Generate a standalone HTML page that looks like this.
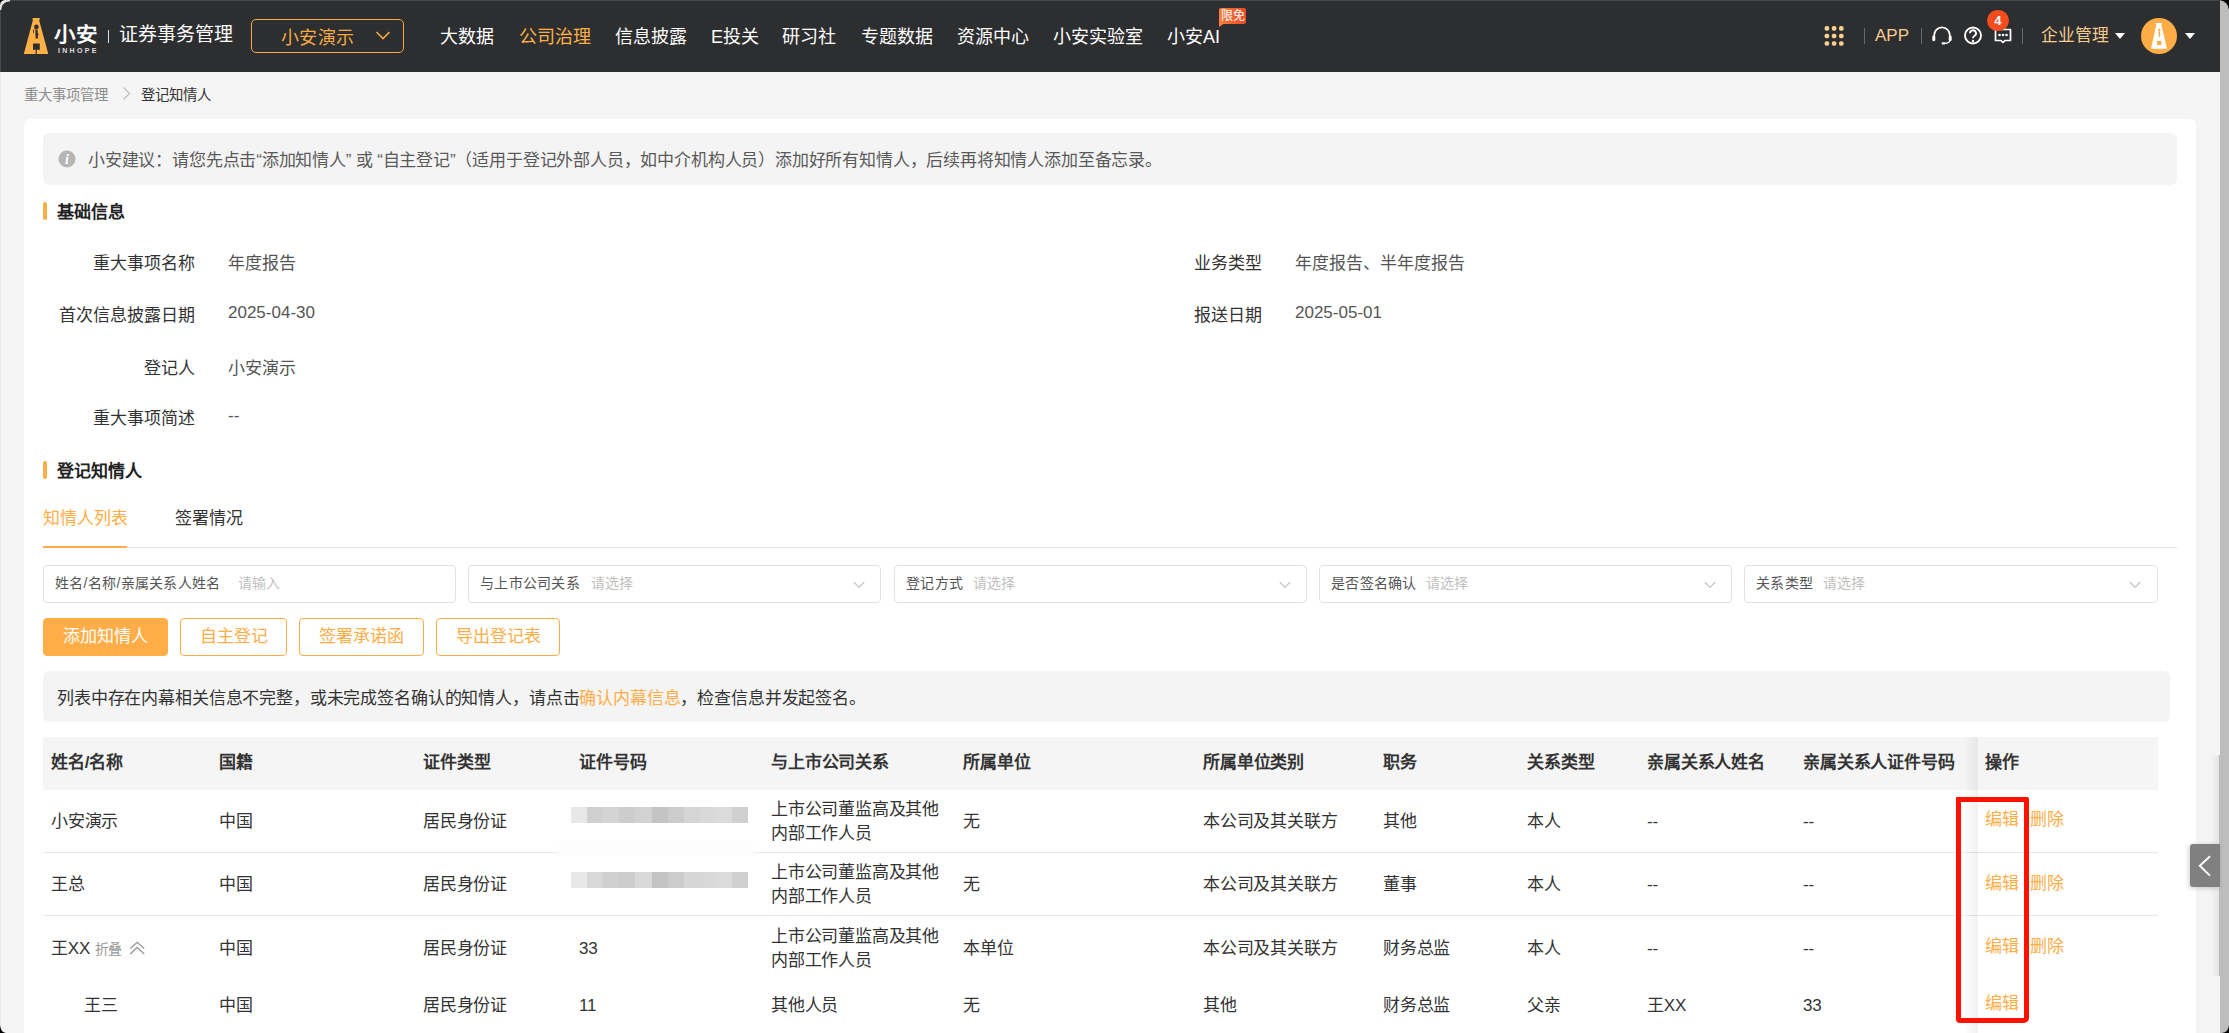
<!DOCTYPE html>
<html lang="zh-CN"><head><meta charset="utf-8">
<style>
*{box-sizing:border-box;margin:0;padding:0}
html,body{text-spacing-trim:space-all;width:2229px;height:1033px;overflow:hidden;background:#f5f5f5;font-family:"Liberation Sans",sans-serif;color:#333}
.a{position:absolute;white-space:nowrap}
#hdr{position:absolute;left:0;top:0;width:2220px;height:72px;background:#2d2e30;border-top-left-radius:10px;border-top:1px solid #47484a;border-left:1px solid #47484a}
.nav{position:absolute;top:25px;font-size:18px;line-height:24px;color:#fff}
.card{position:absolute;left:24px;top:119px;width:2172px;height:940px;background:#fff;border-radius:6px}
.lbl{position:absolute;font-size:17px;line-height:22px;color:#333;text-align:right;white-space:nowrap}
.val{position:absolute;font-size:17px;line-height:22px;color:#555;white-space:nowrap}
.sec{position:absolute;left:43px;width:4px;height:18px;background:#ffad47;border-radius:2px}
.sect{position:absolute;left:57px;font-size:17px;line-height:22px;font-weight:bold;color:#222}
.inp{position:absolute;top:565px;height:38px;width:413px;border:1px solid #e3e3e3;border-radius:4px;background:#fff}
.inp svg{}
.inp .l{position:absolute;left:11px;top:7px;font-size:14px;line-height:20px;color:#555;letter-spacing:0.3px}
.inp .p{position:absolute;top:7px;font-size:14px;line-height:20px;color:#bfbfbf}
.btn{position:absolute;top:618px;height:38px;border:1px solid #ffad47;border-radius:4px;color:#ffad47;font-size:17px;line-height:36px;text-align:center}
.th{position:absolute;top:752px;font-size:17px;line-height:22px;font-weight:bold;color:#333;letter-spacing:-0.15px;white-space:nowrap}
.td{position:absolute;font-size:17px;line-height:22px;color:#333;white-space:nowrap;letter-spacing:-0.2px}
.op{position:absolute;font-size:17px;line-height:22px;color:#ffad47;white-space:nowrap}
</style></head><body>
<div id="hdr"></div>
<!-- logo -->
<svg class="a" style="left:22px;top:16px" width="30" height="40" viewBox="0 0 30 40">
<path fill="#fdb045" d="M10.5 2 H18 L17.2 4.5 L26.3 38 H1.8 L10.8 4.5 Z"/>
<rect x="11" y="27.5" width="6.8" height="6.3" fill="#2d2e30"/>
<rect x="13.6" y="33.8" width="1.2" height="4.2" fill="#2d2e30"/>
<circle cx="14.4" cy="10.9" r="2.3" fill="#2d2e30"/>
<path fill="#2d2e30" d="M13.3 13.5 h2.2 l0.3 4 l1 1 l-1 1.2 l0.2 2.8 h-2.4 Z"/>
<path fill="none" stroke="#2d2e30" stroke-width="0.8" d="M12.2 13 q-1.3 1.5 -0.6 4"/>
</svg>
<div class="a" style="left:54px;top:22px;font-size:21.5px;line-height:26px;font-weight:bold;color:#fff;transform:scaleY(0.93);transform-origin:0 100%">小安</div>
<div class="a" style="left:58px;top:47px;font-size:7px;line-height:8px;font-weight:bold;color:#ddd;letter-spacing:2.3px">INHOPE</div>
<div class="a" style="left:108px;top:30px;width:1px;height:13px;background:#ddd"></div>
<div class="a" style="left:119px;top:23px;font-size:19px;line-height:24px;color:#fff">证券事务管理</div>
<div class="a" style="left:251px;top:19px;width:153px;height:34px;border:1.5px solid #f5a940;border-radius:5px"></div>
<div class="a" style="left:281px;top:26px;font-size:18px;line-height:24px;letter-spacing:0.4px;color:#f5a940">小安演示</div>
<svg class="a" style="left:375px;top:30px" width="16" height="11" viewBox="0 0 16 11"><path d="M1.5 2 L8 8.5 L14.5 2" fill="none" stroke="#f5a940" stroke-width="1.6"/></svg>

<div class="nav" style="left:440px">大数据</div>
<div class="nav" style="left:519px;color:#fdb045">公司治理</div>
<div class="nav" style="left:615px">信息披露</div>
<div class="nav" style="left:711px">E投关</div>
<div class="nav" style="left:782px">研习社</div>
<div class="nav" style="left:861px">专题数据</div>
<div class="nav" style="left:957px">资源中心</div>
<div class="nav" style="left:1053px">小安实验室</div>
<div class="nav" style="left:1167px">小安AI</div>
<div class="a" style="left:1219px;top:8px;width:27px;height:16px;background:linear-gradient(to right,#fb7d3c,#ef4a28);border-radius:2px 2px 2px 0;font-size:12px;line-height:16px;color:#fff;text-align:center">限免</div>
<div class="a" style="left:1219px;top:23px;width:0;height:0;border-top:4px solid #fb7d3c;border-right:6px solid transparent"></div>

<!-- right icons -->
<svg class="a" style="left:1823px;top:25px" width="22" height="22" viewBox="0 0 22 22" fill="#f9d08f">
<rect x="1.6" y="1.1" width="4.6" height="4.6" rx="1.8"/><rect x="8.8" y="1.1" width="4.6" height="4.6" rx="1.8"/><rect x="16" y="1.1" width="4.6" height="4.6" rx="1.8"/>
<rect x="1.6" y="8.7" width="4.6" height="4.6" rx="1.8"/><rect x="8.8" y="8.7" width="4.6" height="4.6" rx="1.8"/><rect x="16" y="8.7" width="4.6" height="4.6" rx="1.8"/>
<rect x="1.6" y="16.2" width="4.6" height="4.6" rx="1.8"/><rect x="8.8" y="16.2" width="4.6" height="4.6" rx="1.8"/><rect x="16" y="16.2" width="4.6" height="4.6" rx="1.8"/>
</svg>
<div class="a" style="left:1864px;top:28px;width:1px;height:16px;background:#6a6a6a"></div>
<div class="a" style="left:1875px;top:25px;font-size:17px;line-height:22px;color:#f5cc8f">APP</div>
<div class="a" style="left:1921px;top:28px;width:1px;height:16px;background:#6a6a6a"></div>
<svg class="a" style="left:1930px;top:25px" width="24" height="22" viewBox="0 0 24 22">
<path d="M4.2 12 V10.2 A7.8 7.8 0 0 1 19.8 10.2 V12" fill="none" stroke="#fff" stroke-width="1.7"/>
<rect x="2.3" y="10.6" width="3" height="5.6" rx="1.4" fill="#fff"/>
<rect x="18.7" y="10.6" width="3" height="5.6" rx="1.4" fill="#fff"/>
<path d="M19.8 15.5 Q19.5 18.2 14.5 18.4" fill="none" stroke="#fff" stroke-width="1.4"/>
<rect x="11.6" y="17.2" width="3.8" height="2.3" rx="1.1" fill="#fff"/>
</svg>
<svg class="a" style="left:1962px;top:25px" width="22" height="22" viewBox="0 0 22 22">
<circle cx="11" cy="10.5" r="8" fill="none" stroke="#fff" stroke-width="1.9"/>
<path d="M8 8.2 A3 3 0 1 1 12.2 11 Q11 11.6 11 13.2" fill="none" stroke="#fff" stroke-width="1.9"/>
<circle cx="11" cy="15.9" r="1.2" fill="#fff"/>
</svg>
<svg class="a" style="left:1993px;top:27px" width="20" height="18" viewBox="0 0 20 18">
<path d="M2.5 2.5 H17.5 V13.5 H12 L10 15.5 L8 13.5 H2.5 Z" fill="none" stroke="#fff" stroke-width="1.7" stroke-linejoin="round"/>
<circle cx="6.5" cy="8" r="1.3" fill="#fff"/><circle cx="10" cy="8" r="1.3" fill="#fff"/><circle cx="13.5" cy="8" r="1.3" fill="#fff"/>
</svg>
<div class="a" style="left:1987px;top:9.5px;width:21.5px;height:21.5px;border-radius:50%;background:#f24c1f;color:#fff;font-size:13px;font-weight:bold;line-height:21.5px;text-align:center">4</div>
<div class="a" style="left:2022px;top:28px;width:1px;height:16px;background:#6a6a6a"></div>
<div class="a" style="left:2041px;top:23.5px;font-size:16.8px;line-height:24px;color:#f5cc8f">企业管理</div>
<div class="a" style="left:2115px;top:33px;width:0;height:0;border-left:5px solid transparent;border-right:5px solid transparent;border-top:6px solid #fff"></div>
<div class="a" style="left:2141px;top:18px;width:36px;height:36px;border-radius:50%;background:#fdad45"></div>
<svg class="a" style="left:2149px;top:22px" width="20" height="28" viewBox="0 0 20 28">
<path fill="#fff" d="M6.5 1 H13 L12.4 3 L18 26.8 H2 L7.2 3 Z"/>
<rect x="8" y="19" width="4.4" height="4" fill="#fdad45"/>
<circle cx="10.2" cy="8" r="1.3" fill="#fdad45"/>
<path fill="#fdad45" d="M9.6 9.5 h1.3 l0.2 2.2 l0.6 0.7 l-0.6 0.7 l0.1 1.8 h-1.4 Z"/>
</svg>
<div class="a" style="left:2185px;top:33px;width:0;height:0;border-left:5px solid transparent;border-right:5px solid transparent;border-top:6px solid #fff"></div>
<!-- scrollbar strip -->
<div class="a" style="left:2220px;top:0;width:9px;height:1033px;background:#bdbdbd"></div>

<!-- breadcrumb -->
<div class="a" style="left:24px;top:85px;font-size:14.4px;color:#999;line-height:20px;color:#8c8c8c">重大事项管理</div>
<svg class="a" style="left:121px;top:86px" width="11" height="15" viewBox="0 0 11 15"><path d="M2.5 1.5 L8.5 7.5 L2.5 13.5" fill="none" stroke="#bbb" stroke-width="1.1"/></svg>
<div class="a" style="left:141px;top:85px;font-size:14.4px;line-height:20px;color:#333">登记知情人</div>

<div class="card"></div>
<div class="a" style="left:43px;top:133px;width:2134px;height:52px;background:#f4f4f4;border-radius:6px"></div>
<svg class="a" style="left:58px;top:150px" width="18" height="18" viewBox="0 0 18 18"><circle cx="9" cy="9" r="8.5" fill="#b5b5b5"/><text x="9" y="14" text-anchor="middle" font-family="Liberation Serif" font-style="italic" font-weight="bold" font-size="14" fill="#fff">i</text></svg>
<div class="a" style="left:88px;top:150px;font-size:17px;line-height:22px;letter-spacing:-0.18px;color:#595959">小安建议：请您先点击“添加知情人” 或 “自主登记”（适用于登记外部人员，如中介机构人员）添加好所有知情人，后续再将知情人添加至备忘录。</div>

<div class="sec" style="top:202px"></div>
<div class="sect" style="top:202px">基础信息</div>

<div class="lbl" style="left:0;width:195px;top:253px">重大事项名称</div>
<div class="val" style="left:228px;top:253px">年度报告</div>
<div class="lbl" style="left:0;width:195px;top:305px">首次信息披露日期</div>
<div class="val" style="left:228px;top:302px">2025-04-30</div>
<div class="lbl" style="left:0;width:195px;top:358px">登记人</div>
<div class="val" style="left:228px;top:358px">小安演示</div>
<div class="lbl" style="left:0;width:195px;top:408px">重大事项简述</div>
<div class="val" style="left:228px;top:405px">--</div>

<div class="lbl" style="left:1100px;width:162px;top:253px">业务类型</div>
<div class="val" style="left:1295px;top:253px">年度报告、半年度报告</div>
<div class="lbl" style="left:1100px;width:162px;top:305px">报送日期</div>
<div class="val" style="left:1295px;top:302px">2025-05-01</div>

<div class="sec" style="top:461px"></div>
<div class="sect" style="top:461px">登记知情人</div>

<div class="a" style="left:43px;top:508px;font-size:17px;line-height:22px;color:#ffad47">知情人列表</div>
<div class="a" style="left:175px;top:508px;font-size:17px;line-height:22px;color:#333">签署情况</div>
<div class="a" style="left:43px;top:547px;width:2134px;height:1px;background:#e4e7ed"></div>
<div class="a" style="left:43px;top:546px;width:84px;height:2px;background:#ffad47"></div>

<div class="inp" style="left:43px"><span class="l">姓名/名称/亲属关系人姓名</span><span class="p" style="left:194px">请输入</span></div>
<div class="inp" style="left:468px"><span class="l">与上市公司关系</span><span class="p" style="left:122px">请选择</span><svg style="position:absolute;left:384px;top:15px" width="12" height="8" viewBox="0 0 12 8"><path d="M0.8 1 L6 6.5 L11.2 1" fill="none" stroke="#c4c4c4" stroke-width="1.1"/></svg></div>
<div class="inp" style="left:894px"><span class="l">登记方式</span><span class="p" style="left:78px">请选择</span><svg style="position:absolute;left:384px;top:15px" width="12" height="8" viewBox="0 0 12 8"><path d="M0.8 1 L6 6.5 L11.2 1" fill="none" stroke="#c4c4c4" stroke-width="1.1"/></svg></div>
<div class="inp" style="left:1319px"><span class="l">是否签名确认</span><span class="p" style="left:106px">请选择</span><svg style="position:absolute;left:384px;top:15px" width="12" height="8" viewBox="0 0 12 8"><path d="M0.8 1 L6 6.5 L11.2 1" fill="none" stroke="#c4c4c4" stroke-width="1.1"/></svg></div>
<div class="inp" style="left:1744px;width:414px"><span class="l">关系类型</span><span class="p" style="left:78px">请选择</span><svg style="position:absolute;left:384px;top:15px" width="12" height="8" viewBox="0 0 12 8"><path d="M0.8 1 L6 6.5 L11.2 1" fill="none" stroke="#c4c4c4" stroke-width="1.1"/></svg></div>

<div class="btn" style="left:43px;width:125px;background:#ffad47;color:#fff">添加知情人</div>
<div class="btn" style="left:180px;width:107px">自主登记</div>
<div class="btn" style="left:299px;width:125px">签署承诺函</div>
<div class="btn" style="left:436px;width:124px">导出登记表</div>

<div class="a" style="left:43px;top:671px;width:2127px;height:51px;background:#f4f4f4;border-radius:6px"></div>
<div class="a" style="left:57px;top:688px;font-size:17px;line-height:22px;letter-spacing:-0.15px;color:#333">列表中存在内幕相关信息不完整，或未完成签名确认的知情人，请点击<span style="color:#ffad47">确认内幕信息</span>，检查信息并发起签名。</div>

<!-- table -->
<div class="a" style="left:43px;top:737px;width:2115px;height:53px;background:#f5f5f5"></div>
<div class="th" style="left:51px">姓名/名称</div>
<div class="th" style="left:219px">国籍</div>
<div class="th" style="left:423px">证件类型</div>
<div class="th" style="left:579px">证件号码</div>
<div class="th" style="left:771px">与上市公司关系</div>
<div class="th" style="left:963px">所属单位</div>
<div class="th" style="left:1203px">所属单位类别</div>
<div class="th" style="left:1383px">职务</div>
<div class="th" style="left:1527px">关系类型</div>
<div class="th" style="left:1647px">亲属关系人姓名</div>
<div class="th" style="left:1803px">亲属关系人证件号码</div>
<div class="th" style="left:1985px">操作</div>

<!-- row borders -->
<div class="a" style="left:43px;top:852px;width:2115px;height:1px;background:#e8e8f0"></div>
<div class="a" style="left:43px;top:915px;width:2115px;height:1px;background:#e8e8f0"></div>
<div class="a" style="left:559px;top:840px;width:194px;height:16px;background:#fdfdfd"></div>
<div class="a" style="left:571.0px;top:807px;width:16.2px;height:16px;background:#e8e8e8"></div><div class="a" style="left:587.1px;top:807px;width:16.2px;height:16px;background:#d0d0d0"></div><div class="a" style="left:603.2px;top:807px;width:16.2px;height:16px;background:#d4d4d4"></div><div class="a" style="left:619.3px;top:807px;width:16.2px;height:16px;background:#cdcdcd"></div><div class="a" style="left:635.4px;top:807px;width:16.2px;height:16px;background:#d2d2d2"></div><div class="a" style="left:651.5px;top:807px;width:16.2px;height:16px;background:#c4c4c4"></div><div class="a" style="left:667.6px;top:807px;width:16.2px;height:16px;background:#cccccc"></div><div class="a" style="left:683.7px;top:807px;width:16.2px;height:16px;background:#d5d5d5"></div><div class="a" style="left:699.8px;top:807px;width:16.2px;height:16px;background:#d9d9d9"></div><div class="a" style="left:715.9px;top:807px;width:16.2px;height:16px;background:#dbdbdb"></div><div class="a" style="left:732.0px;top:807px;width:16.2px;height:16px;background:#d0d0d0"></div>
<div class="a" style="left:571.0px;top:872px;width:16.2px;height:16px;background:#e8e8e8"></div><div class="a" style="left:587.1px;top:872px;width:16.2px;height:16px;background:#d8d8d8"></div><div class="a" style="left:603.2px;top:872px;width:16.2px;height:16px;background:#d0d0d0"></div><div class="a" style="left:619.3px;top:872px;width:16.2px;height:16px;background:#cdcdcd"></div><div class="a" style="left:635.4px;top:872px;width:16.2px;height:16px;background:#d9d9d9"></div><div class="a" style="left:651.5px;top:872px;width:16.2px;height:16px;background:#c3c3c3"></div><div class="a" style="left:667.6px;top:872px;width:16.2px;height:16px;background:#cccccc"></div><div class="a" style="left:683.7px;top:872px;width:16.2px;height:16px;background:#d6d6d6"></div><div class="a" style="left:699.8px;top:872px;width:16.2px;height:16px;background:#d9d9d9"></div><div class="a" style="left:715.9px;top:872px;width:16.2px;height:16px;background:#dbdbdb"></div><div class="a" style="left:732.0px;top:872px;width:16.2px;height:16px;background:#d0d0d0"></div>
<!-- fixed col shadow -->
<div class="a" style="left:1963px;top:737px;width:15px;height:296px;background:linear-gradient(to right,rgba(0,0,0,0),rgba(0,0,0,0.06))"></div>

<div class="td" style="left:51px;top:811px">小安演示</div>
<div class="td" style="left:219px;top:811px">中国</div>
<div class="td" style="left:423px;top:811px">居民身份证</div>
<div class="td" style="left:771px;top:798px;line-height:24px">上市公司董监高及其他<br>内部工作人员</div>
<div class="td" style="left:963px;top:811px">无</div>
<div class="td" style="left:1203px;top:811px">本公司及其关联方</div>
<div class="td" style="left:1383px;top:811px">其他</div>
<div class="td" style="left:1527px;top:811px">本人</div>
<div class="td" style="left:1647px;top:811px">--</div>
<div class="td" style="left:1803px;top:811px">--</div>
<div class="op" style="left:1985px;top:809px">编辑</div>
<div class="op" style="left:2030px;top:809px">删除</div>

<div class="td" style="left:51px;top:874px">王总</div>
<div class="td" style="left:219px;top:874px">中国</div>
<div class="td" style="left:423px;top:874px">居民身份证</div>
<div class="td" style="left:771px;top:861px;line-height:24px">上市公司董监高及其他<br>内部工作人员</div>
<div class="td" style="left:963px;top:874px">无</div>
<div class="td" style="left:1203px;top:874px">本公司及其关联方</div>
<div class="td" style="left:1383px;top:874px">董事</div>
<div class="td" style="left:1527px;top:874px">本人</div>
<div class="td" style="left:1647px;top:874px">--</div>
<div class="td" style="left:1803px;top:874px">--</div>
<div class="op" style="left:1985px;top:873px">编辑</div>
<div class="op" style="left:2030px;top:873px">删除</div>

<div class="td" style="left:51px;top:938px">王XX <span style="font-size:14px;color:#999">折叠</span></div>
<svg class="a" style="left:129px;top:941px" width="17" height="15" viewBox="0 0 17 15"><path d="M1.2 7.6 L8.2 1.3 L15.2 7.6 M1.2 13 L8.2 6.5 L15.2 13" fill="none" stroke="#999" stroke-width="1.3"/></svg>
<div class="td" style="left:219px;top:938px">中国</div>
<div class="td" style="left:423px;top:938px">居民身份证</div>
<div class="td" style="left:579px;top:938px">33</div>
<div class="td" style="left:771px;top:925px;line-height:24px">上市公司董监高及其他<br>内部工作人员</div>
<div class="td" style="left:963px;top:938px">本单位</div>
<div class="td" style="left:1203px;top:938px">本公司及其关联方</div>
<div class="td" style="left:1383px;top:938px">财务总监</div>
<div class="td" style="left:1527px;top:938px">本人</div>
<div class="td" style="left:1647px;top:938px">--</div>
<div class="td" style="left:1803px;top:938px">--</div>
<div class="op" style="left:1985px;top:936px">编辑</div>
<div class="op" style="left:2030px;top:936px">删除</div>

<div class="td" style="left:84px;top:995px">王三</div>
<div class="td" style="left:219px;top:995px">中国</div>
<div class="td" style="left:423px;top:995px">居民身份证</div>
<div class="td" style="left:579px;top:995px">11</div>
<div class="td" style="left:771px;top:995px">其他人员</div>
<div class="td" style="left:963px;top:995px">无</div>
<div class="td" style="left:1203px;top:995px">其他</div>
<div class="td" style="left:1383px;top:995px">财务总监</div>
<div class="td" style="left:1527px;top:995px">父亲</div>
<div class="td" style="left:1647px;top:995px">王XX</div>
<div class="td" style="left:1803px;top:995px">33</div>
<div class="op" style="left:1985px;top:993px">编辑</div>

<!-- red box -->
<div class="a" style="left:1956px;top:797px;width:73px;height:226px;border:5px solid #ff1100;border-radius:1px 2px 5px 4px"></div>
<div class="a" style="left:2210px;top:755px;width:10px;height:221px;background:linear-gradient(to right,rgba(0,0,0,0),rgba(0,0,0,0.07))"></div>
<div class="a" style="left:2219px;top:755px;width:1px;height:221px;background:#bbb"></div>
<!-- side tab -->
<div class="a" style="left:2190px;top:844px;width:30px;height:43px;background:#808080;border-radius:3px 0 0 3px;box-shadow:-1px 1px 5px rgba(0,0,0,0.2)"></div>
<svg class="a" style="left:2195px;top:853px" width="18" height="26" viewBox="0 0 18 26"><path d="M15 3.2 L4.8 12.8 L15 22.6" fill="none" stroke="#fff" stroke-width="1.9"/></svg>

<div class="a" style="left:0;top:72px;width:1px;height:961px;background:#ebebeb"></div>
<svg class="a" style="left:0;top:0" width="12" height="12" viewBox="0 0 12 12"><path d="M0 0 H5 Q0.5 0.5 0 5 Z" fill="#000"/><path d="M0.5 10 Q0.8 1 10 0.5" fill="none" stroke="#e8e8e8" stroke-width="1.3"/></svg>
<svg class="a" style="left:0;top:1025px" width="6" height="8" viewBox="0 0 6 8"><path d="M0 0 Q0.5 7 6 8 H0 Z" fill="#000"/></svg>
<svg class="a" style="left:2222px;top:1025px" width="7" height="8" viewBox="0 0 7 8"><path d="M7 0 Q6.5 7 0 8 H7 Z" fill="#000"/></svg>
<svg class="a" style="left:2219px;top:0" width="10" height="10" viewBox="0 0 10 10"><path d="M0 0 H10 V10 Q9 1 0 0 Z" fill="#000"/></svg>
</body></html>
